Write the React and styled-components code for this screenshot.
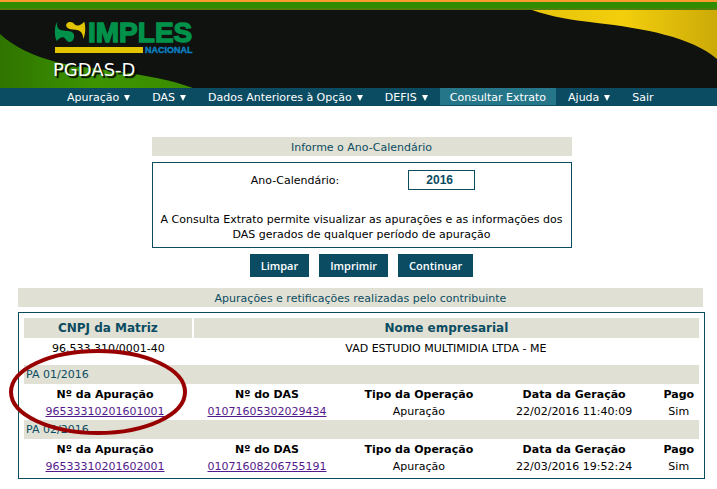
import React from 'react';
import styled, { createGlobalStyle } from 'styled-components';

const teal = '#0b4c62';
const sand = '#e0e0d4';

const GlobalStyle = createGlobalStyle`
  *, *::before, *::after { box-sizing: border-box; }
  body {
    margin: 0;
    background: #fff;
    color: #000;
    font: 11px/15px "DejaVu Sans", Verdana, sans-serif;
  }
`;

const Header = styled.header`
  border-top: 2px solid #fb9a2e;
`;

const Stripe = styled.div`
  height: 8px;
  background: #2f8b00;
  border-bottom: 2px solid #4f7f0a;
`;

const Banner = styled.div`
  position: relative;
  height: 78px;
  padding: 11px 0 0 53px;
  background: #0f120e;
`;

const Wave = styled.svg`
  position: absolute;
  top: 0;
  left: ${({ $side }) => ($side === 'left' ? '0' : 'auto')};
  right: ${({ $side }) => ($side === 'right' ? '0' : 'auto')};
  height: 78px;
`;

const Brand = styled.div`
  position: relative;
`;

const LogoArt = styled.svg`
  display: block;
  overflow: visible;
  font-family: "Liberation Sans", Arial, sans-serif;
  font-weight: bold;
`;

const AppName = styled.h1`
  margin: 4px 0 0;
  color: #fff;
  font-size: 18px;
  line-height: 22px;
  font-weight: normal;
  text-shadow: 2px 2px 1px #000;
`;

const Nav = styled.nav`
  display: flex;
  height: 18px;
  padding-left: 57px;
  background: ${teal};
`;

const NavLink = styled.a`
  height: 17px;
  padding: 0 10px;
  margin-right: 2px;
  color: #fff;
  line-height: 19px;
  text-decoration: none;
  white-space: nowrap;
  background: ${({ $active }) => ($active ? '#267689' : 'transparent')};
`;

const Caret = styled.span`
  display: inline-block;
  margin-left: 5px;
  border: 3px solid transparent;
  border-top: 6px solid #fff;
  border-bottom: 0;
`;

const Main = styled.main`
  padding: 31px 12px 0 18px;
`;

const Form = styled.form`
  width: 420px;
  max-width: 100%;
  margin: 0 auto;
`;

const SectionTitle = styled.h2`
  height: 19px;
  margin: 0 ${({ $inset }) => ($inset ? '2px' : '0')} 0 0;
  background: ${sand};
  color: ${teal};
  font-size: 11px;
  line-height: 21px;
  font-weight: normal;
  text-align: center;
`;

const YearPanel = styled.div`
  margin-top: 6px;
  padding: 7px 4px 5px;
  border: 1px solid ${teal};
`;

const Field = styled.div`
  display: flex;
  align-items: center;
  justify-content: center;
  gap: 69px;
  padding-left: 3px;
`;

const YearInput = styled.input`
  width: 67px;
  height: 20px;
  padding: 0 4px 0 0;
  border: 1px solid ${teal};
  border-radius: 0;
  color: ${teal};
  font: bold 12px "Liberation Sans", Arial, sans-serif;
  text-align: center;
`;

const Hint = styled.p`
  margin: 22px 0 0;
  text-align: center;
`;

const Actions = styled.div`
  display: flex;
  justify-content: center;
  gap: 10px;
  margin-top: 6px;
`;

const Button = styled.button`
  height: 23px;
  padding: 0 11px;
  border: 0;
  background: ${teal};
  color: #fff;
  font: 600 11px "Open Sans", sans-serif;
`;

const Results = styled.section`
  position: relative;
  margin-top: 11px;
`;

const ResultsPanel = styled.div`
  margin-top: 5px;
  padding: 5px 5px 3px;
  border: 1px solid ${teal};
`;

const Table = styled.table`
  width: 100%;
  table-layout: fixed;
  border-collapse: collapse;
  text-align: center;
  th, td { padding: 0; }
`;

const CompanyHead = styled.th`
  height: 20px;
  background: ${sand};
  color: ${teal};
  font-size: 12px;
  & + & { border-left: 2px solid #fff; }
`;

const CompanyCell = styled.td`
  height: 27px;
  vertical-align: top;
  line-height: 21px;
`;

const Period = styled.th`
  height: 19px;
  background: ${sand};
  color: ${teal};
  font-weight: normal;
  line-height: 19px;
  text-align: left;
  text-indent: 2px;
`;

const ColumnHead = styled.th`
  height: 20px;
  white-space: nowrap;
`;

const Cell = styled.td`
  height: 16px;
  vertical-align: top;
  line-height: 15px;
  white-space: nowrap;
`;

const DocLink = styled.a`
  color: #551a8b;
`;

const Col = styled.col`
  width: ${({ $w }) => $w};
`;

const Marker = styled.svg`
  position: absolute;
  left: -10px;
  top: 60px;
  pointer-events: none;
`;

const menu = [
  { label: 'Apuração', sub: true },
  { label: 'DAS', sub: true },
  { label: 'Dados Anteriores à Opção', sub: true },
  { label: 'DEFIS', sub: true },
  { label: 'Consultar Extrato', active: true },
  { label: 'Ajuda', sub: true },
  { label: 'Sair' },
];

const columns = ['Nº da Apuração', 'Nº do DAS', 'Tipo da Operação', 'Data da Geração', 'Pago'];

const periods = [
  { name: 'PA 01/2016', id: '96533310201601001', das: '01071605302029434', type: 'Apuração', date: '22/02/2016 11:40:09', paid: 'Sim' },
  { name: 'PA 02/2016', id: '96533310201602001', das: '01071608206755191', type: 'Apuração', date: '22/03/2016 19:52:24', paid: 'Sim' },
];

function Logo() {
  return (
    <LogoArt width="150" height="34" role="img" aria-label="Simples Nacional">
      <path d="M4.5 .5 C3.6 4 4 7 7 8.8 C11 10.5 16 9.5 19 11 C22 13 22 18 18.5 20.5 C16 21.7 14 20.5 12.5 18 C10.5 15 7 16 3.7 20 C1.5 16 .8 5 4.5 .5Z" fill="#00924a" />
      <path d="M31.3 .8 C32.8 6 32.6 13 30.3 18 C30 13 28.5 10.5 25 9.2 C22 8 18 9 15 7.2 C12.5 5.5 12.5 2.5 15.5 1.2 C18 .5 20 1.5 21.5 3.2 C24 5.5 28 4.5 31.3 .8Z" fill="#e2c400" />
      <text x="35" y="21" fontSize="28" fill="#00924a" stroke="#00924a" strokeWidth="1.4">IMPLES</text>
      <rect x="2" y="26" width="88" height="6" fill="#e2c400" />
      <text x="92" y="32" fontSize="9" fill="#0b7fc0" stroke="#0b7fc0" strokeWidth=".4">NACIONAL</text>
    </LogoArt>
  );
}

export default function App() {
  return (
    <>
      <GlobalStyle />
      <Header>
        <Stripe />
        <Banner>
          <Wave $side="left" width="200" viewBox="0 0 200 78" aria-hidden="true">
            <defs>
              <linearGradient id="leaf">
                <stop offset="0" stopColor="#2f7400" />
                <stop offset="0.5" stopColor="#3d9400" />
                <stop offset="1" stopColor="#3a8c00" />
              </linearGradient>
            </defs>
            <path d="M0 24 C14 37 34 46 56 52 C88 60 150 62 193 78 H0Z" fill="url(#leaf)" />
          </Wave>
          <Wave $side="right" width="185" viewBox="0 0 185 78" aria-hidden="true">
            <defs>
              <linearGradient id="gold">
                <stop offset="0" stopColor="#e8c40c" />
                <stop offset="0.5" stopColor="#f2ce0c" />
                <stop offset="1" stopColor="#ccaa08" />
              </linearGradient>
            </defs>
            <path d="M0 0 C20 7 40 10 65 13 C110 18 160 27 185 49 V0Z" fill="url(#gold)" />
          </Wave>
          <Brand>
            <Logo />
            <AppName>PGDAS-D</AppName>
          </Brand>
        </Banner>
        <Nav>
          {menu.map((m) => (
            <NavLink key={m.label} href="#" $active={m.active}>
              {m.label}
              {m.sub && <Caret />}
            </NavLink>
          ))}
        </Nav>
      </Header>
      <Main>
        <Form onSubmit={(e) => e.preventDefault()}>
          <SectionTitle>Informe o Ano-Calendário</SectionTitle>
          <YearPanel>
            <Field>
              <label htmlFor="year">Ano-Calendário:</label>
              <YearInput id="year" defaultValue="2016" />
            </Field>
            <Hint>
              A Consulta Extrato permite visualizar as apurações e as informações dos
              DAS gerados de qualquer período de apuração
            </Hint>
          </YearPanel>
          <Actions>
            <Button type="reset">Limpar</Button>
            <Button type="button">Imprimir</Button>
            <Button type="submit">Continuar</Button>
          </Actions>
        </Form>
        <Results>
          <SectionTitle $inset>Apurações e retificações realizadas pelo contribuinte</SectionTitle>
          <ResultsPanel>
            <Table>
              <colgroup>
                <Col $w="25%" />
                <Col $w="75%" />
              </colgroup>
              <thead>
                <tr>
                  <CompanyHead>CNPJ da Matriz</CompanyHead>
                  <CompanyHead>Nome empresarial</CompanyHead>
                </tr>
              </thead>
              <tbody>
                <tr>
                  <CompanyCell>96.533.310/0001-40</CompanyCell>
                  <CompanyCell>VAD ESTUDIO MULTIMIDIA LTDA - ME</CompanyCell>
                </tr>
              </tbody>
            </Table>
            <Table>
              <colgroup>
                <Col $w="24%" />
                <Col $w="24%" />
                <Col $w="21%" />
                <Col $w="25%" />
                <Col $w="6%" />
              </colgroup>
              {periods.map((p) => (
                <tbody key={p.name}>
                  <tr>
                    <Period colSpan={5}>{p.name}</Period>
                  </tr>
                  <tr>
                    {columns.map((c) => (
                      <ColumnHead key={c}>{c}</ColumnHead>
                    ))}
                  </tr>
                  <tr>
                    <Cell><DocLink href="#">{p.id}</DocLink></Cell>
                    <Cell><DocLink href="#">{p.das}</DocLink></Cell>
                    <Cell>{p.type}</Cell>
                    <Cell>{p.date}</Cell>
                    <Cell>{p.paid}</Cell>
                  </tr>
                </tbody>
              ))}
            </Table>
          </ResultsPanel>
          <Marker width="180" height="88" aria-hidden="true">
            <ellipse cx="90" cy="44" rx="87" ry="41" fill="none" stroke="#980000" strokeWidth="4" />
          </Marker>
        </Results>
      </Main>
    </>
  );
}
